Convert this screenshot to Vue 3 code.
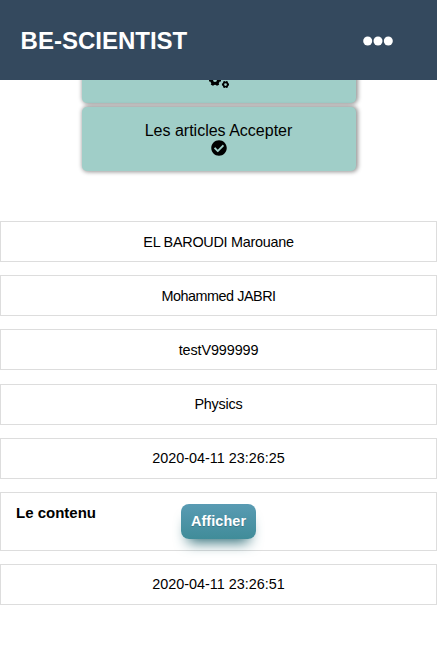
<script setup>
const before = [
  { text: 'EL BAROUDI Marouane', tracking: -0.27 },
  { text: 'Mohammed JABRI', tracking: -0.47 },
  { text: 'testV999999', tracking: -0.1 },
  { text: 'Physics', tracking: -0.2, raised: true },
  { text: '2020-04-11 23:26:25', tracking: 0, raised: true },
]
const bigTeeth = [30, 90, 150, 210, 270, 330]
const smallTeeth = [30, 90, 150, 210, 270, 330]
</script>

<template>
  <div class="page">
    <header class="bar">
      <h1 class="brand">BE-SCIENTIST</h1>
      <svg class="dots" viewBox="0 0 30 10" aria-hidden="true">
        <circle cx="4.7" cy="5" r="4.5" /><circle cx="15" cy="5" r="4.5" /><circle cx="25.3" cy="5" r="4.5" />
      </svg>
    </header>
    <nav class="cards">
      <div class="card clipped">
        <svg class="cogs" viewBox="0 0 640 512" aria-hidden="true">
          <circle class="ring" cx="192" cy="256" r="110" stroke-width="95" />
          <rect v-for="a in bigTeeth" :key="a" x="144" y="64" width="96" height="70" rx="12" :transform="`rotate(${a} 192 256)`" />
          <g v-for="cy in [112, 400]" :key="cy">
            <circle class="ring" cx="528" :cy="cy" r="70" stroke-width="52" />
            <rect v-for="a in smallTeeth" :key="a" x="498" :y="cy - 114" width="60" height="36" rx="6" :transform="`rotate(${a} 528 ${cy})`" />
          </g>
        </svg>
      </div>
      <div class="card">
        <span>Les articles Accepter</span>
        <svg class="check" viewBox="0 0 512 512" aria-hidden="true">
          <path d="M504 256c0 136.967-111.033 248-248 248S8 392.967 8 256 119.033 8 256 8s248 111.033 248 248zM227.314 387.314l184-184c6.248-6.248 6.248-16.379 0-22.627l-22.627-22.627c-6.248-6.249-16.379-6.249-22.628 0L216 308.118l-70.059-70.059c-6.248-6.248-16.379-6.248-22.628 0l-22.627 22.627c-6.248 6.248-6.248 16.379 0 22.627l104 104c6.249 6.249 16.379 6.249 22.628.001z" />
        </svg>
      </div>
    </nav>
    <main class="rows">
      <div v-for="r in before" :key="r.text" class="row" :class="{ raised: r.raised }" :style="{ letterSpacing: r.tracking + 'px' }">{{ r.text }}</div>
      <div class="row content">
        <strong class="label">Le contenu</strong>
        <button class="show">Afficher</button>
      </div>
      <div class="row raised">2020-04-11 23:26:51</div>
    </main>
  </div>
</template>

<style>
body { margin: 0; background: #fff; }
</style>

<style scoped>
.page { height: 663px; overflow: hidden; font-family: "Liberation Sans", Arial, sans-serif; color: #000; }
.bar { box-sizing: border-box; height: 80px; padding: 2px 44px 0 20.6px; background: #34495e; display: flex; align-items: center; justify-content: space-between; position: relative; z-index: 1; }
.brand { margin: 0; font-size: 24px; line-height: 28px; color: #fff; }
.dots { width: 30px; height: 10px; fill: #fff; }
.cards { width: 274px; margin: 0 auto 0 82px; display: flex; flex-direction: column; gap: 4px; }
.card { box-sizing: border-box; height: 64px; padding: 14px 1px 0 0; border-radius: 5px; background: #a0cec8; box-shadow: 1px 0 4px 1px rgba(0, 0, 0, 0.42); display: flex; flex-direction: column; align-items: center; font-size: 16px; line-height: 19px; }
.clipped { margin-top: -41px; padding-top: 33px; }
.cogs { width: 20px; height: 16px; }
.ring { fill: none; stroke: #000; }
.check { width: 16px; height: 16px; margin-top: -0.5px; }
.rows { margin-top: 50px; display: flex; flex-direction: column; gap: 13.2px; }
.row { box-sizing: border-box; height: 41px; border: 1px solid #ddd; font-size: 14.4px; line-height: 40px; text-align: center; }
.raised { line-height: 38px; }
.content { height: 59px; padding: 11px 15px 0; display: grid; grid-template-columns: 1fr 75px 1fr; align-items: start; }
.label { font-size: 15px; line-height: 18px; text-align: left; }
.show { width: 75px; height: 35px; padding: 0; border: 0; border-radius: 8px; background: linear-gradient(#599bb3, #408c99); color: #fff; font: bold 14.4px/35px "Liberation Sans", Arial, sans-serif; letter-spacing: 0.1px; text-shadow: 0 1px 0 #3d768a; box-shadow: 0 10px 14px -7px #276873; }
</style>
